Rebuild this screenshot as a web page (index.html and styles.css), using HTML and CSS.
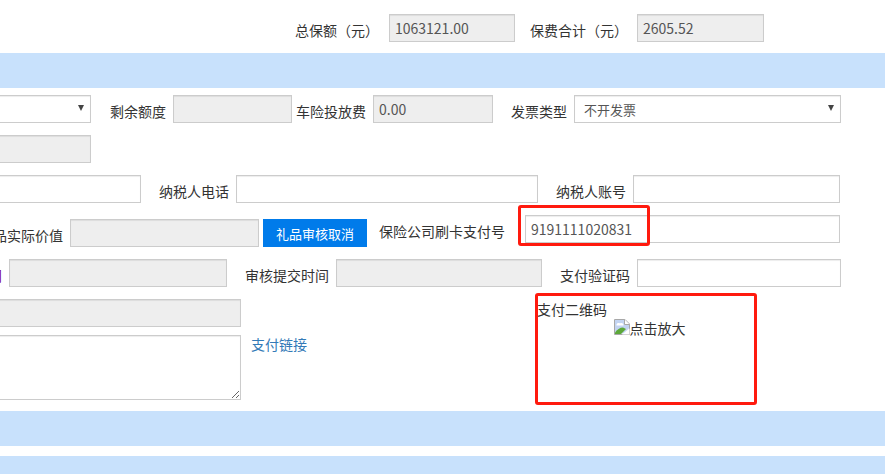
FILE: index.html
```html
<!DOCTYPE html>
<html lang="zh-CN">
<head>
<meta charset="utf-8">
<title>支付信息</title>
<link rel="stylesheet" href="styles.css">
</head>
<body>
<main class="page">
  <div class="row row-total">
    <label class="lbl lbl-wide">总保额（元）</label>
    <input class="field" disabled value="1063121.00">
    <label class="lbl lbl-fee">保费合计（元）</label>
    <input class="field" disabled value="2605.52">
  </div>
  <div class="band band-first"></div>
  <div class="row row-a">
    <div class="select-wrap"><select class="field select"><option></option></select></div>
    <label class="lbl">剩余额度</label>
    <input class="field" disabled>
    <label class="lbl">车险投放费</label>
    <input class="field" disabled value="0.00">
    <label class="lbl">发票类型</label>
    <div class="select-wrap"><select class="field select"><option>不开发票</option></select></div>
  </div>
  <div class="row row-b">
    <input class="field" disabled>
  </div>
  <div class="row row-c">
    <input class="field">
    <label class="lbl">纳税人电话</label>
    <input class="field">
    <label class="lbl">纳税人账号</label>
    <input class="field">
  </div>
  <div class="row row-d">
    <label class="lbl low">礼品实际价值</label>
    <input class="field low" disabled>
    <button class="btn low" type="button">礼品审核取消</button>
    <label class="lbl lbl-pay">保险公司刷卡支付号</label>
    <input class="field" value="9191111020831">
  </div>
  <div class="row row-e">
    <label class="lbl lbl-purple">间</label>
    <input class="field" disabled>
    <label class="lbl">审核提交时间</label>
    <input class="field" disabled>
    <label class="lbl">支付验证码</label>
    <input class="field">
  </div>
  <div class="row-f">
    <input class="field" disabled>
    <textarea class="field area"></textarea>
    <a class="pay-link" href="#">支付链接</a>
    <div class="qr">
      <div>支付二维码</div>
      <div class="qr-img">
        <svg class="broken" width="16" height="16" viewBox="0 0 16 16" aria-hidden="true">
          <path d="M.5.5H11L15.500 5V15.500H.5Z" fill="#dfe7f7" stroke="#a8a8a8"/>
          <path d="M1 1H10.500V5.500H15V9L10 14H1Z" fill="#c3d4f2"/>
          <path d="M2.500 6C2.500 4 5 3.500 6 4.500C7.500 3.500 10 4.500 9.500 6.500H2.500Z" fill="#fff"/>
          <path d="M1 15V13.500C3 10.500 6 8.500 9 8.500L12 10L7 15Z" fill="#5da83a"/>
          <path d="M10.500.5V5.500H15.500" fill="#fff" stroke="#a8a8a8"/>
          <path d="M8 15.500L15.500 9.500V15.500Z" fill="#fff"/>
        </svg><span>点击放大</span>
      </div>
    </div>
  </div>
  <div class="band band-second"></div>
  <div class="band band-third"></div>
</main>
<div class="mark mark-pay"></div>
<div class="mark mark-qr"></div>
</body>
</html>
```

FILE: styles.css
```css
* {
  box-sizing: border-box;
}

html,
body {
  margin: 0;
  height: 474px;
  overflow: hidden;
  background: #fff;
}

body {
  position: relative;
  font-family: "Noto Sans CJK SC", "Liberation Sans", sans-serif;
  font-size: 14px;
  color: #333;
}

.page {
  width: 985px;
  margin-left: -100px;
  padding-top: 14px;
}

.row {
  display: grid;
  align-items: start;
  margin-top: 12px;
}

.row-total {
  margin-top: 0;
  grid-template-columns: 489px 126px 122px 127px;
}

.row-a {
  margin-top: 7px;
  grid-template-columns: 191px 82px 119px 81px 120px 81px 267px;
}

.row-b {
  grid-template-columns: 191px;
}

.row-c {
  grid-template-columns: 241px 95px 302px 95px 207px;
}

.row-d {
  grid-template-columns: 170px 189px 108px 158px 315px;
}

.row-e {
  grid-template-columns: 109px 218px 109px 206px 95px 204px;
}

.row-f {
  display: grid;
  grid-template-columns: 341px 296px 225px;
  grid-template-rows: 28px 65px;
  row-gap: 8px;
  margin-top: 12px;
}

.band {
  height: 35px;
  background: #c8e1fc;
}

.band-first {
  margin-top: 11px;
}

.band-second {
  margin-top: 11px;
}

.band-third {
  margin-top: 10px;
}

.lbl {
  height: 28px;
  padding-top: 2px;
  padding-right: 7px;
  line-height: 28px;
  text-align: right;
  white-space: nowrap;
}

.lbl-wide {
  padding-right: 10px;
}

.lbl-fee {
  padding-right: 9px;
}

.lbl-pay {
  padding-right: 20px;
}

.lbl-purple {
  color: #800080;
}

.low {
  margin-top: 4px;
}

.field {
  display: block;
  width: 100%;
  height: 28px;
  padding: 0 5px;
  border: 1px solid #ccc;
  border-radius: 0;
  outline: 0;
  background: #fff;
  box-shadow: inset 0 1px 1px rgba(0, 0, 0, 0.075);
  font: inherit;
  color: #555;
}

.field:disabled {
  background: #eee;
  color: #555;
  opacity: 1;
}

.select-wrap {
  position: relative;
}

.select-wrap::after {
  content: "";
  position: absolute;
  top: 10px;
  right: 7px;
  border-left: 3px solid transparent;
  border-right: 3px solid transparent;
  border-top: 6px solid #444;
  pointer-events: none;
}

.select {
  padding-left: 9px;
  font-size: 13px;
  appearance: none;
}

.btn {
  justify-self: end;
  width: 104px;
  height: 28px;
  padding: 0;
  border: 0;
  background: #007bea;
  font: inherit;
  font-size: 13px;
  color: #fff;
}

.area {
  grid-column: 1;
  grid-row: 2;
  height: 65px;
  padding: 5px;
  resize: both;
}

.pay-link {
  grid-column: 2;
  grid-row: 2;
  padding-left: 10px;
  line-height: 18px;
  color: #337ab7;
  text-decoration: none;
}

.qr {
  grid-column: 3;
  grid-row: 1 / span 2;
  padding-top: 1px;
  line-height: 19px;
}

.qr-img {
  display: flex;
  align-items: flex-start;
  justify-content: center;
}

.broken {
  flex: none;
}

.mark {
  position: absolute;
  border: 3px solid #ff1a0e;
  border-radius: 3px;
  pointer-events: none;
}

.mark-pay {
  left: 518px;
  top: 205px;
  width: 132px;
  height: 41px;
}

.mark-qr {
  left: 535px;
  top: 293px;
  width: 222px;
  height: 112px;
}
```
